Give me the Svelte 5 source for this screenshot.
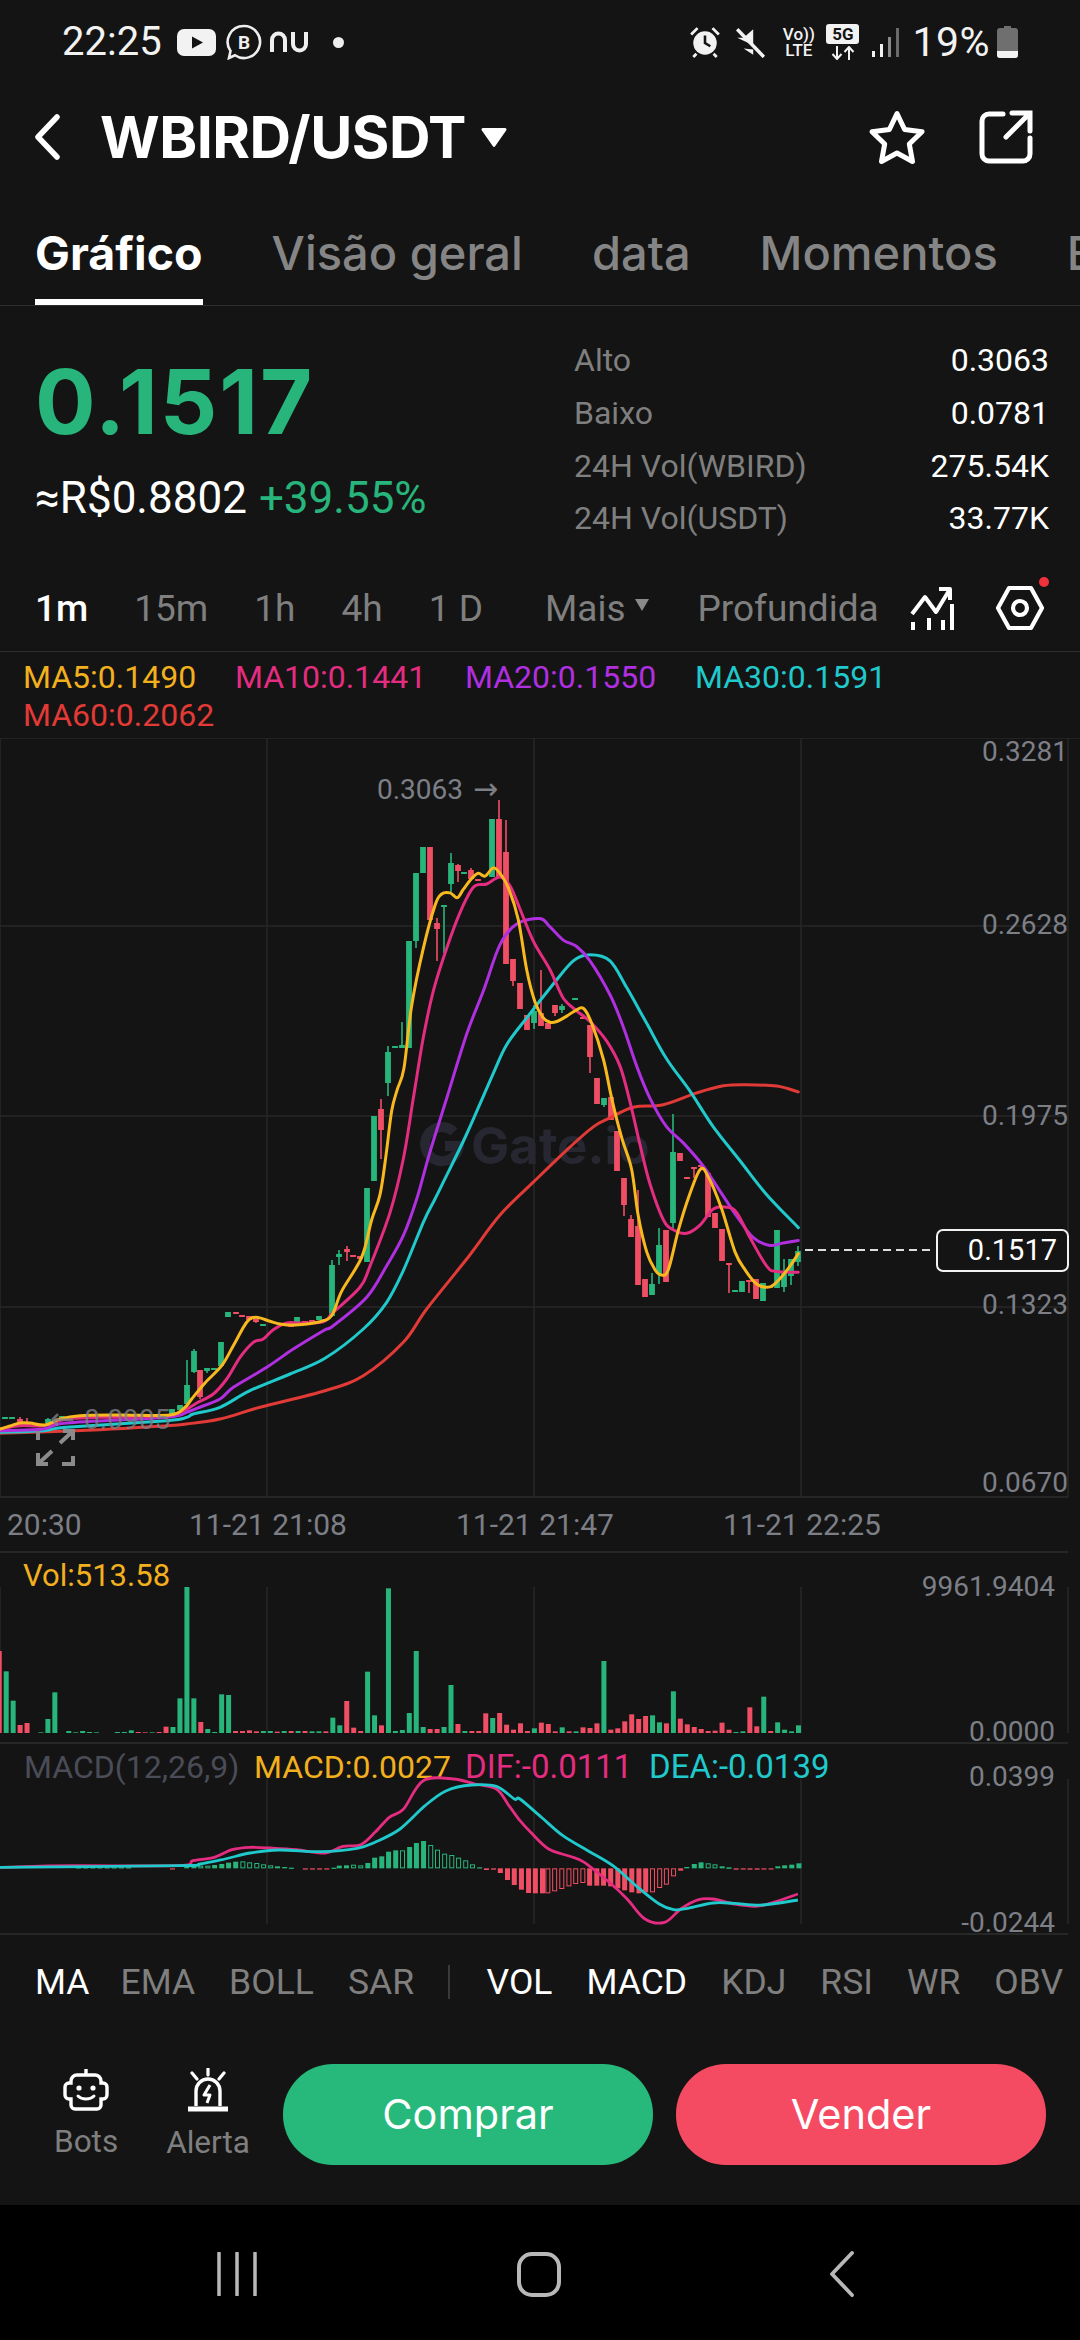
<script>
  const G = '#27b57b', R = '#f04e64';
  const z3 = (p) => [300 + p[0] / 3, 760 + p[1] / 2.8];
  const z4 = (p) => [p[0] / 3, 1200 + p[1] / 3];
  const z8 = (p) => [p[0] / 2.8, 1750 + p[1] / 3];
  const z9 = (p) => [520 + p[0] / 2.8, 1750 + p[1] / 3];
  function smooth(pts) {
    let d = `M${pts[0][0].toFixed(1)} ${pts[0][1].toFixed(1)}`;
    for (let i = 0; i < pts.length - 1; i++) {
      const a = pts[i - 1] || pts[i], b = pts[i], c = pts[i + 1], e = pts[i + 2] || c;
      const c1 = [b[0] + (c[0] - a[0]) / 6, b[1] + (c[1] - a[1]) / 6];
      const c2 = [c[0] - (e[0] - b[0]) / 6, c[1] - (e[1] - b[1]) / 6];
      d += `C${c1[0].toFixed(1)} ${c1[1].toFixed(1)} ${c2[0].toFixed(1)} ${c2[1].toFixed(1)} ${c[0].toFixed(1)} ${c[1].toFixed(1)}`;
    }
    return d;
  }
  const ma = [
    { color: '#e23a36', pts: [
      ...[[0,703],[300,692],[500,680],[560,675],[660,660],[780,625],[975,575],[1090,530],[1210,430],[1280,330],[1400,180]].map(z4),
      ...[[600,1277],[700,1185],[800,1095],[880,1030],[930,1005],[1000,975],[1090,968],[1190,935],[1270,915],[1340,912],[1430,916],[1495,932]].map(z3)] },
    { color: '#20c9cb', pts: [
      ...[[0,700],[130,695],[200,685],[500,665],[560,655],[580,645],[660,625],[750,575],[870,525],[975,478],[1090,390],[1160,310],[1210,215],[1270,70]].map(z4),
      ...[[405,1232],[430,1185],[500,1050],[580,880],[620,800],[680,725],[760,630],[820,565],[870,548],[930,565],[980,640],[1040,740],[1100,840],[1170,930],[1240,1030],[1320,1125],[1400,1220],[1495,1312]].map(z3)] },
    { color: '#b02fe0', pts: [
      ...[[0,695],[130,690],[200,672],[500,655],[560,640],[590,628],[660,600],[700,565],[800,505],[880,450],[970,395],[1000,380],[1100,295],[1160,200],[1210,110]].map(z4),
      ...[[350,1232],[390,1100],[440,950],[500,770],[550,650],[600,520],[650,462],[720,447],[750,470],[790,507],[830,525],[870,565],[930,660],[970,750],[1010,860],[1050,950],[1100,1030],[1150,1075],[1210,1140],[1260,1210],[1310,1280],[1360,1340],[1410,1362],[1450,1355],[1495,1348]].map(z3)] },
    { color: '#e42c80', pts: [
      ...[[0,690],[60,680],[130,680],[200,660],[300,655],[500,650],[560,630],[590,612],[640,585],[680,540],[720,475],[760,430],[790,420],[820,392],[860,372],[900,372],[970,368],[1000,340],[1080,265]].map(z4),
      ...[[210,1420],[270,1270],[310,1120],[340,950],[370,780],[400,650],[440,530],[480,430],[515,365],[535,352],[560,350],[600,330],[630,355],[660,420],[700,510],[750,590],[790,670],[830,705],[870,735],[920,790],[960,860],[990,960],[1020,1080],[1050,1190],[1090,1290],[1120,1318],[1160,1328],[1200,1305],[1240,1260],[1280,1255],[1310,1270],[1350,1340],[1400,1420],[1430,1435],[1495,1437]].map(z3)] },
    { color: '#f8b91f', pts: [
      ...[[0,690],[30,681],[60,672],[90,672],[135,678],[180,660],[240,650],[360,648],[510,648],[555,625],[575,600],[615,552],[665,500],[700,440],[740,370],[768,355],[810,367],[840,375],[885,378],[960,368],[996,348]].map(z4),
      ...[[125,1490],[185,1395],[215,1290],[240,1220],[258,1110],[275,985],[292,925],[312,865],[335,690],[370,530],[405,410],[425,378],[450,375],[472,388],[490,365],[515,335],[535,320],[555,328],[580,305],[600,320],[625,360],[655,450],[680,590],[705,680],[730,725],[750,737],[770,735],[800,720],[825,705],[850,698],[875,740],[910,840],[935,950],[965,1060],[995,1150],[1015,1280],[1040,1380],[1065,1430],[1085,1445],[1105,1430],[1135,1320],[1165,1230],[1200,1150],[1225,1170],[1265,1260],[1305,1380],[1335,1430],[1370,1470],[1410,1478],[1440,1455],[1470,1420],[1495,1385]].map(z3)] }
  ].map((m) => ({ color: m.color, d: smooth(m.pts) }));

  // x, top, bottom, wickTop, wickBottom, green
  const candles = [
    [5,1418,1420,1418,1420,1],[12,1418,1420,1418,1420,1],[20,1420,1424,1418,1426,0],[27,1423,1426,1419,1427,0],[48,1420,1424,1419,1427,1],
    [62,1417,1419,1417,1419,1],[76,1416,1418,1416,1418,1],[110,1415,1417,1415,1417,0],[172,1410,1415,1410,1416,1],[180,1406,1411,1406,1412,1],
    [187,1386,1405,1361,1406,1],[194,1352,1373,1350,1374,1],[200,1371,1398,1371,1400,0],[207,1369,1372,1369,1374,1],[214,1369,1371,1369,1371,1],
    [221,1343,1367,1343,1368,1],[228,1313,1318,1313,1318,1],[236,1313,1315,1313,1315,0],[242,1316,1318,1316,1318,0],[249,1317,1321,1317,1322,0],
    [256,1320,1323,1320,1324,0],[263,1325,1327,1325,1327,1],[283,1324,1326,1324,1326,1],[291,1325,1328,1325,1328,0],[297,1318,1326,1318,1326,1],
    [305,1322,1325,1322,1325,0],[312,1321,1323,1321,1323,0],[319,1317,1321,1317,1321,1],[325,1320,1322,1320,1322,0],
    [332,1266,1317,1261,1318,1],[339,1255,1258,1251,1266,1],[347,1250,1253,1247,1262,0],[353,1256,1258,1256,1258,0],[360,1257,1260,1257,1260,0],
    [367,1189,1263,1189,1263,1],[374,1117,1182,1117,1182,1],[381,1110,1131,1100,1160,0],[388,1053,1084,1047,1097,1],[395,1047,1049,1047,1049,1],
    [402,1046,1049,1023,1049,1],[409,942,1049,942,1049,1],[416,874,942,874,949,1],[423,848,874,848,874,1],[430,848,921,848,921,0],
    [437,924,930,919,962,0],[444,906,908,907,954,1],[451,864,885,854,893,1],[458,866,872,865,883,0],[464,873,875,873,875,1],[471,871,880,869,880,0],
    [478,880,882,880,882,0],[485,884,886,884,886,0],[492,820,878,820,878,1],[499,820,878,801,878,0],[506,853,965,821,965,0],[513,960,982,960,987,0],
    [520,984,1010,984,1010,0],[527,1016,1031,1016,1031,0],[534,1012,1024,1006,1030,1],[541,1014,1027,971,1027,0],[548,1024,1030,1024,1030,0],
    [555,1006,1014,1006,1017,0],[562,1007,1011,1005,1014,1],[575,999,1001,999,1001,1],[583,1018,1020,1018,1020,0],
    [590,1026,1058,1026,1074,0],[597,1079,1105,1079,1105,0],[604,1099,1106,1099,1108,1],[611,1098,1121,1098,1121,0],[617,1132,1172,1132,1172,0],
    [624,1179,1206,1179,1217,0],[631,1220,1238,1216,1238,0],[638,1227,1286,1191,1286,0],[645,1280,1298,1280,1298,0],[652,1285,1296,1274,1296,1],
    [659,1246,1275,1229,1285,1],[666,1231,1283,1231,1283,0],[673,1153,1224,1115,1231,1],[680,1154,1162,1154,1162,0],[687,1178,1180,1178,1180,0],
    [694,1168,1170,1168,1179,0],[701,1166,1168,1166,1170,0],[708,1174,1218,1174,1218,0],[715,1214,1229,1214,1229,0],[722,1230,1262,1230,1262,0],
    [729,1264,1266,1265,1294,0],[735,1291,1293,1291,1293,1],[742,1282,1293,1282,1293,1],[749,1281,1283,1281,1294,0],[756,1280,1300,1280,1300,0],
    [763,1284,1302,1284,1302,1],[770,1287,1289,1287,1289,0],[777,1231,1289,1231,1289,1],[784,1272,1288,1260,1293,1],[791,1260,1277,1260,1286,1],[798,1252,1263,1247,1267,1]
  ];

  const vols = [-336,397,485,-558,-552,0,580,540,460,0,576,580,576,579,580,0,0,579,579,574,-579,-580,580,-579,-563,564,478,144,478,-549,570,579,466,468,-576,-576,-574,-577,576,576,-578,576,-576,576,-576,577,577,-577,536,559,-486,-566,-576,398,529,-559,148,576,573,522,336,564,-570,-570,564,438,-555,576,-576,-576,-523,537,-522,-557,-572,-553,-576,568,-551,-555,-577,565,-577,577,-565,-567,-553,366,-572,-568,-547,-526,-540,-531,529,550,-553,457,-539,-556,-564,-570,-576,-575,-551,-572,579,577,-505,-562,473,-576,550,572,577,559];
  const volBars = vols.map((v, i) => {
    const top = Math.abs(v);
    return { x: 798.5 - 6.95 * (vols.length - 1 - i), y: 1540 + top / 3, h: v === 0 ? 0 : (582 - top) / 3, color: v > 0 ? G : R };
  }).filter((b) => b.h > 0);

  // z-position, level, kind (0 green, 1 green hollow, 2 red, 3 red hollow)
  const hist8 = [[220,355,0],[240,355,0],[260,355,0],[280,355,0],[300,355,0],[320,355,0],[340,355,0],[360,355,0],[483,361,2],
    [523,348,0],[543,345,0],[562,350,1],[582,350,1],[601,348,0],[621,345,0],[640,341,0],[660,338,0],[680,337,1],[699,340,1],[719,342,1],[738,346,1],[758,349,1],[777,352,1],[797,354,0],[816,356,0],
    [855,361,2],[875,361,2],[895,361,2],[915,361,2],[935,356,0],[950,350,0],[970,349,0],[990,347,1],[1010,349,1],[1030,342,0],[1049,326,0],[1069,322,0],[1088,308,0],[1108,304,0],[1127,304,1],[1147,294,0],[1166,282,0],[1186,276,0],[1206,288,1],[1225,302,1],[1245,314,1],[1265,318,1],[1284,326,1],[1304,334,1],[1323,346,1],[1343,355,0],
    [1362,363,2],[1382,362,2],[1401,372,2],[1421,393,2],[1440,408,2],[1460,422,2],[1480,432,2],[1499,433,2],[1519,433,2]];
  const hist9 = [[78,433,3],[97,427,3],[117,420,3],[137,412,3],[156,405,3],[176,402,3],[195,410,2],[215,410,2],[234,410,2],[254,412,2],[274,418,2],[293,424,2],[313,430,2],[333,433,2],[352,430,2],[371,430,3],[391,417,3],[410,407,3],[430,382,3],[450,365,2],[467,354,0],[488,345,0],[507,340,0],[527,343,1],[546,346,1],[566,352,1],[585,355,1],[605,362,2],[625,360,2],[644,362,2],[664,362,2],[683,361,2],[703,359,2],[722,352,0],[741,349,0],[761,347,0],[781,343,0]];
  const base = 1750 + 358 / 3;
  const hist = [...hist8.map((h) => [h[0] / 2.8, h[1], h[2]]), ...hist9.map((h) => [520 + h[0] / 2.8, h[1], h[2]])].map(([x, l, k]) => {
    const y = 1750 + l / 3;
    const top = Math.min(y, base), h = Math.max(Math.abs(y - base), 1.2);
    return { x: x - 2.5, y: top, w: 5, h, hollow: k % 2 === 1, color: k < 2 ? G : R };
  });

  const dif = smooth([
    ...[[0,355],[200,350],[500,350],[540,335],[600,325],[650,302],[700,295],[760,297],[830,302],[910,312],[960,292],[1010,287],[1050,250],[1090,205],[1130,180],[1185,95],[1270,90],[1330,105],[1390,120],[1425,170]].map(z8),
    ...[[0,215],[30,250],[80,300],[140,322],[180,340],[250,400],[300,450],[350,510],[405,520],[450,480],[500,452],[540,450],[600,465],[660,472],[710,460],[778,435]].map(z9)]);
  const dea = smooth([
    ...[[0,355],[500,350],[560,345],[630,330],[700,312],[780,303],[900,308],[1000,298],[1050,280],[1120,240],[1190,170],[1250,125],[1320,108],[1390,112],[1440,150]].map(z8),
    ...[[0,150],[60,205],[120,260],[190,305],[260,350],[330,415],[390,465],[430,482],[470,478],[540,462],[600,463],[680,468],[778,453]].map(z9)]);

  const stats = [['Alto', '0.3063'], ['Baixo', '0.0781'], ['24H Vol(WBIRD)', '275.54K'], ['24H Vol(USDT)', '33.77K']];
  const legend = [['MA5:0.1490', 'c-y'], ['MA10:0.1441', 'c-p'], ['MA20:0.1550', 'c-v'], ['MA30:0.1591', 'c-c'], ['MA60:0.2062', 'c-r']];
  const hLines = [927, 1117, 1308, 1498];
  const vLines = [267, 534, 801, 1068];
  const yLabels = [['0.3281', 762], ['0.2628', 935], ['0.1975', 1126], ['0.1323', 1315], ['0.0670', 1493]];
  const xLabels = [['20:30', 7], ['11-21 21:08', 189], ['11-21 21:47', 456], ['11-21 22:25', 723]];
  const inds = [['MA', 1], ['EMA', 0], ['BOLL', 0], ['SAR', 0]];
  const inds2 = [['VOL', 1], ['MACD', 1], ['KDJ', 0], ['RSI', 0], ['WR', 0], ['OBV', 0]];
</script>

<div class="page">
  <div class="status">
    <span class="time">22:25</span>
    <svg class="ic-yt" viewBox="0 0 39 27" width="39" height="27"><rect width="39" height="27" rx="7" fill="#f2f2f2"/><path d="M15 7.5 26 13.5 15 19.5Z" fill="#141414"/></svg>
    <svg class="ic-b" viewBox="0 0 36 36" width="36" height="36"><path d="M18 2a16 16 0 1 1-9 29.2L3 34l1.5-7A16 16 0 0 1 18 2Z" fill="none" stroke="#eee" stroke-width="2.6"/><text x="18" y="25" text-anchor="middle" class="b-t">B</text></svg>
    <svg class="ic-nu" viewBox="0 0 40 22" width="40" height="22"><path d="M2 21V9a6.5 6.5 0 0 1 13 0v12M23 1v12a6.5 6.5 0 0 0 13 0V1" fill="none" stroke="#eee" stroke-width="4"/></svg>
    <span class="dot"></span>
    <span class="grow"></span>
    <svg viewBox="0 0 30 30" width="32" height="32"><circle cx="15" cy="16" r="11" fill="#f2f2f2"/><path d="M15 9v7l5 3" stroke="#141414" stroke-width="2.4" fill="none"/><path d="M2 8 8 2M28 8l-6-6M7 26l-3 3M23 26l3 3" stroke="#f2f2f2" stroke-width="2.6"/></svg>
    <svg class="ml15" viewBox="0 0 30 30" width="32" height="32"><path d="M3 11h6l9-8v15zM9 21l9 6v-5z" fill="#f2f2f2"/><path d="M3 3l25 26" stroke="#f2f2f2" stroke-width="3.2"/></svg>
    <div class="volte ml17"><span>Vo))</span><span>LTE</span></div>
    <div class="fiveg ml12"><span class="fg">5G</span><svg viewBox="0 0 26 14" width="26" height="14"><path d="M7 0v12M2.5 8 7 13l4.5-5M19 14V2M14.500 6 19 1l4.500 5" fill="none" stroke="#f2f2f2" stroke-width="2"/></svg></div>
    <svg class="ml13" viewBox="0 0 27 29" width="27" height="29"><rect x="0" y="23" width="3" height="6" fill="#f2f2f2"/><rect x="8" y="16" width="3" height="13" fill="#f2f2f2"/><rect x="16" y="9" width="3" height="20" fill="#8a8a8a"/><rect x="24" y="0" width="3" height="29" fill="#6a6a6a"/></svg>
    <span class="pct">19%</span>
    <svg class="ml5" viewBox="0 0 21 32" width="21" height="32"><path d="M7 0h7v2h4a3 3 0 0 1 3 3v24a3 3 0 0 1-3 3H3a3 3 0 0 1-3-3V5a3 3 0 0 1 3-3h4z" fill="#6f6f6f"/><path d="M0 25h21v4a3 3 0 0 1-3 3H3a3 3 0 0 1-3-3z" fill="#f2f2f2"/></svg>
  </div>

  <div class="header">
    <svg viewBox="0 0 26 46" width="26" height="46"><path d="M23 3 4 23l19 20" fill="none" stroke="#fff" stroke-width="5.500" stroke-linecap="round" stroke-linejoin="round"/></svg>
    <span class="title">WBIRD/USDT</span>
    <svg class="caret" viewBox="0 0 28 22" width="28" height="22"><path d="M3 2h22a1.500 1.500 0 0 1 1.300 2.300L15.300 20a1.600 1.600 0 0 1-2.600 0L1.700 4.300A1.500 1.500 0 0 1 3 2Z" fill="#fff"/></svg>
    <span class="grow"></span>
    <svg viewBox="0 0 60 56" width="60" height="56"><path d="M30 4.500 37.600 20.500 55 22.800 42.300 35 45.500 52.500 30 44 14.500 52.500 17.700 35 5 22.800 22.400 20.500Z" fill="none" stroke="#fff" stroke-width="5" stroke-linejoin="round"/></svg>
    <svg class="share" viewBox="0 0 54 54" width="54" height="54"><path d="M24 4H10a7 7 0 0 0-7 7v33a7 7 0 0 0 7 7h34a7 7 0 0 0 7-7V28" fill="none" stroke="#fff" stroke-width="5" stroke-linecap="round"/><path d="M27 27 50 4M33 3h18v18" fill="none" stroke="#fff" stroke-width="5" stroke-linecap="round"/></svg>
  </div>

  <div class="tabs">
    <div class="tab on">Gráfico</div>
    <div class="tab">Visão geral</div>
    <div class="tab">data</div>
    <div class="tab">Momentos</div>
    <div class="tab">Bots</div>
  </div>

  <div class="summary">
    <div class="left">
      <div class="price">0.1517</div>
      <div class="sub"><span class="fiat">≈R$0.8802</span><span class="chg">+39.55%</span></div>
    </div>
    <div class="right">
      {#each stats as s}
        <div class="row"><span class="lab">{s[0]}</span><span class="val">{s[1]}</span></div>
      {/each}
    </div>
  </div>

  <div class="tf">
    <span class="w">1m</span><span>15m</span><span>1h</span><span>4h</span><span>1 D</span>
    <span class="more">Mais<svg viewBox="0 0 16 14" width="16" height="14"><path d="M1 1h14L8 13z" fill="#8a8a8a"/></svg></span>
    <span class="depth">Profundida</span>
    <svg class="ic1" viewBox="0 0 46 44" width="46" height="44"><path d="M3 28 16 11l11 15L41 3M30 3h11v11" fill="none" stroke="#fff" stroke-width="4" stroke-linejoin="round"/><path d="M4 36v8M20 32v12M34 34v10M43 18v26" stroke="#fff" stroke-width="4"/></svg>
    <span class="gear">
      <svg viewBox="0 0 50 46" width="50" height="46"><path d="M14 3h22l11 20-11 20H14L3 23Z" fill="none" stroke="#fff" stroke-width="4.200" stroke-linejoin="round"/><circle cx="25" cy="23" r="7" fill="none" stroke="#fff" stroke-width="4.200"/></svg>
      <i class="reddot"></i>
    </span>
  </div>

  <div class="legend">
    {#each legend as l}<span class={l[1]}>{l[0]}</span>{/each}
  </div>

  <svg class="chart" viewBox="0 739 1080 1197" width="1080" height="1197">
    <!-- grid -->
    {#each hLines as y}<line x1="0" x2="1068" y1={y} y2={y} class="grid"/>{/each}
    {#each vLines as x}<line x1={x} x2={x} y1="739" y2="1498" class="grid"/>{/each}
    <line x1="0" x2="0" y1="739" y2="1498" class="grid"/>
    <line x1="0" x2="1080" y1="739" y2="739" class="grid"/>

    <!-- watermark -->
    <path d="M454 1133a17 17 0 1 0 5 14h-14" fill="none" stroke="#262730" stroke-width="10"/>
    <text x="471" y="1165" class="wm">Gate.io</text>

    <!-- candles -->
    {#each candles as c}
      <line x1={c[0]} x2={c[0]} y1={c[3]} y2={c[4]} stroke={c[5] ? G : R} stroke-width="1.600"/>
      <rect x={c[0] - 2.900} y={c[1]} width="5.800" height={c[2] - c[1]} fill={c[5] ? G : R}/>
    {/each}

    {#each ma as m}
      <path d={m.d} fill="none" stroke={m.color} stroke-width="3" stroke-linejoin="round" stroke-linecap="round"/>
    {/each}

    <!-- labels on the chart -->
    <text x="377" y="800" class="ax">0.3063 <tspan class="arr" dx="3">→</tspan></text>
    <text x="50" y="1430" class="ax fade"><tspan class="arr">←</tspan> <tspan dx="2">0.0905</tspan></text>
    <path d="M38 1432v9M60 1444l13-12M63 1432h10v9M73 1457v8H62M39 1464l13-12M38 1454v11h10" fill="none" stroke="#8b8b8b" stroke-width="4"/>

    {#each yLabels as l}<text x="1068" y={l[1]} text-anchor="end" class="ax">{l[0]}</text>{/each}

    <!-- last price -->
    <line x1="805" x2="932" y1="1251" y2="1251" stroke="#ddd" stroke-width="2" stroke-dasharray="8 5"/>
    <rect x="937" y="1231" width="131" height="41" rx="6" fill="#141414" stroke="#f2f2f2" stroke-width="2"/>
    <text x="1057" y="1261" text-anchor="end" class="last">0.1517</text>

    <!-- time axis -->
    <line x1="0" x2="1068" y1="1498" y2="1498" class="grid"/>
    {#each xLabels as l}<text x={l[1]} y="1536" class="axt">{l[0]}</text>{/each}
    <line x1="0" x2="1068" y1="1553" y2="1553" class="grid2"/>

    <!-- volume -->
    <text x="23" y="1587" class="t-y">Vol:513.58</text>
    {#each [267, 534, 801] as x}<line x1={x} x2={x} y1="1588" y2="1734" class="grid"/>{/each}
    <line x1="0" x2="0" y1="1588" y2="1734" class="grid"/>
    <line x1="1068" x2="1068" y1="1588" y2="1734" class="grid"/>
    {#each volBars as b}<rect x={b.x - 2.500} y={b.y} width="5" height={b.h} fill={b.color}/>{/each}
    <text x="1055" y="1597" text-anchor="end" class="ax">9961.9404</text>
    <text x="1055" y="1742" text-anchor="end" class="ax">0.0000</text>
    <line x1="0" x2="1068" y1="1744" y2="1744" class="grid2"/>

    <!-- macd -->
    <text x="24" y="1779" class="t-g">MACD(12,26,9)</text>
    <text x="254" y="1779" class="t-y2">MACD:0.0027</text>
    <text x="465" y="1779" class="t-p">DIF:-0.0111</text>
    <text x="649" y="1779" class="t-c">DEA:-0.0139</text>
    {#each [267, 534, 801] as x}<line x1={x} x2={x} y1="1780" y2="1925" class="grid"/>{/each}
    <line x1="1068" x2="1068" y1="1780" y2="1925" class="grid"/>
    {#each hist as h}
      {#if h.hollow}
        <rect x={h.x + 0.500} y={h.y + 0.500} width={h.w - 1} height={Math.max(h.h - 1, 0.500)} fill="none" stroke={h.color} stroke-width="1"/>
      {:else}
        <rect x={h.x} y={h.y} width={h.w} height={h.h} fill={h.color}/>
      {/if}
    {/each}
    <path d={dif} fill="none" stroke="#e42c80" stroke-width="2.800"/>
    <path d={dea} fill="none" stroke="#20c9cb" stroke-width="2.800"/>
    <text x="1055" y="1787" text-anchor="end" class="ax">0.0399</text>
    <text x="1055" y="1933" text-anchor="end" class="ax">-0.0244</text>
    <line x1="0" x2="1068" y1="1935" y2="1935" class="grid2"/>
  </svg>

  <div class="inds">
    {#each inds as i}<span class:w={i[1]}>{i[0]}</span>{/each}
    <i class="sep"></i>
    {#each inds2 as i}<span class:w={i[1]}>{i[0]}</span>{/each}
  </div>

  <div class="actions">
    <div class="act bots">
      <svg viewBox="0 0 46 42" width="46" height="42"><path d="M23 0v6M14 6h18a6 6 0 0 1 6 6v2h2a4 4 0 0 1 4 4v8a4 4 0 0 1-4 4h-2v6a4 4 0 0 1-4 4H12a4 4 0 0 1-4-4v-6H6a4 4 0 0 1-4-4v-8a4 4 0 0 1 4-4h2v-2a6 6 0 0 1 6-6Z" fill="none" stroke="#fff" stroke-width="3.400"/><circle cx="16" cy="19" r="2.600" fill="#fff"/><circle cx="30" cy="19" r="2.600" fill="#fff"/><path d="M15 27c4 4 12 4 16 0" fill="none" stroke="#fff" stroke-width="3" stroke-linecap="round"/></svg>
      <span>Bots</span>
    </div>
    <div class="act alert">
      <svg viewBox="0 0 42 44" width="42" height="44"><path d="M21 0v7M5 5l5 6M37 5l-5 6" stroke="#fff" stroke-width="3.200" stroke-linecap="round"/><path d="M9 38V23a12 12 0 0 1 24 0v15" fill="none" stroke="#fff" stroke-width="3.400"/><path d="M1 41h40" stroke="#fff" stroke-width="5"/><path d="M23 17l-6 10h6l-3 8" fill="none" stroke="#fff" stroke-width="3" stroke-linejoin="round"/></svg>
      <span>Alerta</span>
    </div>
    <div class="btn buy">Comprar</div>
    <div class="btn sell">Vender</div>
  </div>

  <div class="nav">
    <svg viewBox="0 0 42 44" width="42" height="44"><path d="M3 1v42M21 1v42M39 1v42" stroke="#b8b8b8" stroke-width="3.500" stroke-linecap="round"/></svg>
    <svg class="home" viewBox="0 0 44 45" width="44" height="45"><rect x="2" y="2" width="40" height="41" rx="13" fill="none" stroke="#b8b8b8" stroke-width="4"/></svg>
    <svg viewBox="0 0 26 46" width="26" height="46"><path d="M23 2 3 23l20 21" fill="none" stroke="#b8b8b8" stroke-width="3.800" stroke-linecap="round" stroke-linejoin="round"/></svg>
  </div>
</div>

<style>
  :global(body) { margin: 0; background: #141414; }
  .page { width: 1080px; height: 2340px; background: #141414; color: #fff; font-family: Roboto, sans-serif; display: flex; flex-direction: column; overflow: hidden; }
  .grow { flex: 1; }

  .status { height: 84px; box-sizing: border-box; padding: 0 62px 0 62px; display: flex; align-items: center; color: #f2f2f2; }
  .time { font-size: 40px; width: 115px; line-height: 84px; }
  .ic-b { margin-left: 10px; }
  .ic-nu { margin-left: 8px; }
  .dot { width: 11px; height: 11px; border-radius: 50%; background: #eee; margin-left: 23px; }
  .b-t { font: 700 19px Roboto, sans-serif; fill: #eee; }
  .ml15 { margin-left: 13px; }
  .ml17 { margin-left: 17px; }
  .ml12 { margin-left: 12px; }
  .ml13 { margin-left: 13px; }
  .ml5 { margin-left: 7px; }
  .volte { display: flex; flex-direction: column; font-size: 17px; font-weight: 500; line-height: 16px; width: 31px; align-items: center; }
  .fiveg { display: flex; flex-direction: column; align-items: center; width: 33px; gap: 2px; }
  .fg { background: #f2f2f2; color: #141414; font-size: 17px; font-weight: 700; line-height: 20px; width: 33px; text-align: center; border-radius: 3px; }
  .pct { font-size: 41px; margin-left: 13px; letter-spacing: 0.5px; }

  .header { height: 106px; box-sizing: border-box; padding: 0 47px 0 34px; display: flex; align-items: center; }
  .title { font-family: Inter, sans-serif; font-weight: 700; font-size: 57.5px; margin-left: 40px; letter-spacing: -0.5px; }
  .caret { margin-left: 14px; }
  .share { margin-left: 52px; }

  .tabs { height: 116px; box-sizing: border-box; padding-left: 35px; display: flex; gap: 69px; border-bottom: 1px solid #2e2e2e; overflow: hidden; white-space: nowrap; }
  .tab { font-family: Inter, sans-serif; font-weight: 500; font-size: 47px; color: #858585; line-height: 56px; padding-top: 35px; box-sizing: border-box; height: 115px; }
  .tab.on { color: #fff; font-weight: 700; font-size: 46.500px; border-bottom: 6px solid #fff; }

  .summary { height: 259px; box-sizing: border-box; display: flex; padding: 0 31px 0 35px; }
  .left { width: 539px; padding-top: 51px; }
  .price { font-family: Inter, sans-serif; font-weight: 700; font-size: 90px; line-height: 90px; color: #27b57b; letter-spacing: 2px; }
  .sub { margin-top: 26px; display: flex; gap: 12px; font-size: 44px; line-height: 50px; font-weight: 400; }
  .chg { color: #27b57b; }
  .right { flex: 1; padding-top: 28px; }
  .row { height: 52.700px; display: flex; justify-content: space-between; align-items: center; font-size: 32px; }
  .lab { color: #7f7f7f; }

  .tf { height: 87px; box-sizing: border-box; border-bottom: 1px solid #2e2e2e; padding-left: 35px; display: flex; align-items: center; gap: 46px; color: #7f7f7f; font-size: 37px; white-space: nowrap; }
  .tf .w { color: #fff; font-weight: 500; }
  .more { margin-left: 16px; display: flex; align-items: center; gap: 9px; }
  .more svg { margin-bottom: 6px; }
  .depth { margin-left: 1px; }
  .ic1 { margin-left: -16px; }
  .gear { position: relative; display: flex; margin-left: -6px; }
  .reddot { position: absolute; top: -8px; right: -4px; width: 10px; height: 10px; border-radius: 50%; background: #f0323c; }

  .legend { height: 86px; box-sizing: border-box; padding: 6px 23px 0; display: grid; grid-template-columns: 212px 230px 230px 200px; grid-auto-rows: 38px; font-size: 32px; line-height: 38px; }
  .c-y { color: #f2b01e; } .c-p { color: #e42c80; } .c-v { color: #b02fe0; } .c-c { color: #20c9cb; } .c-r { color: #e23a36; }

  .chart { display: block; flex: none; }
  .grid { stroke: #272727; stroke-width: 1.500; }
  .grid2 { stroke: #2e2e2e; stroke-width: 1.500; }
  .ax { font: 400 28px Roboto, sans-serif; fill: #7d7f86; }
  .axt { font: 400 30px Roboto, sans-serif; fill: #7d7f86; }
  .arr { font-family: "DejaVu Sans", sans-serif; font-size: 30px; }
  .fade { opacity: 0.8; }
  .last { font: 400 29px Roboto, sans-serif; fill: #fff; }
  .wm { font: 700 51px Inter, sans-serif; fill: #262730; }
  .t-y { font: 400 31px Roboto, sans-serif; fill: #f2b01e; }
  .t-y2 { font: 400 32px Roboto, sans-serif; fill: #f2b01e; }
  .t-g { font: 400 32px Roboto, sans-serif; fill: #4a4c58; }
  .t-p { font: 400 33px Roboto, sans-serif; fill: #e42c80; }
  .t-c { font: 400 33px Roboto, sans-serif; fill: #20c9cb; }

  .inds { height: 92px; box-sizing: border-box; padding: 2px 0 0 35px; display: flex; align-items: center; gap: 34px; font-size: 35.5px; color: #7f7f7f; white-space: nowrap; overflow: hidden; }
  .inds .w { color: #fff; font-weight: 400; }
  .inds span:first-child { margin-right: -3px; }
  .sep { width: 1.500px; height: 34px; background: #3a3a3a; margin-right: 3px; }

  .actions { height: 178px; box-sizing: border-box; display: flex; align-items: center; padding: 0 34px 4px 54px; }
  .act { display: flex; flex-direction: column; align-items: center; font-size: 31.5px; color: #7f7f7f; gap: 12px; }
  .alert { margin-left: 48px; }
  .btn { width: 370px; height: 101px; border-radius: 50px; display: flex; align-items: center; justify-content: center; font-family: Inter, sans-serif; font-size: 41.500px; font-weight: 400; flex: none; }
  .buy { background: #27b87c; margin-left: 33px; }
  .sell { background: #f54b62; margin-left: 23px; }

  .nav { flex: 1; background: #000; display: flex; align-items: center; padding: 3px 225px 0 216px; justify-content: space-between; box-sizing: border-box; }
  .home { margin-left: -9px; }
</style>
